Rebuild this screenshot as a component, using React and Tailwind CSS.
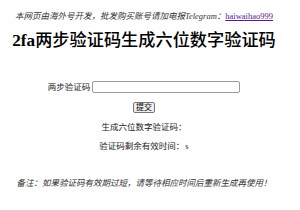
import React from 'react';

const cjk = "font-['Liberation_Serif','Noto_Sans_CJK_SC',serif]";

const App = () => {
  return (
    <div className={`w-[288px] bg-white text-center text-black ${cjk}`}>
      {/* notice line */}
      <p className="pt-[10px] text-[8.5px] leading-[12px] italic text-[#333]">
        本网页由海外号开发，批发购买账号请加电报Telegram：
        <a href="#" className="not-italic text-[#551a8b] underline">haiwaihao999</a>
      </p>

      <h1 className="mt-[9px] text-[17.2px] font-bold leading-[20px]">
        2fa<span className="font-medium">两步验证码生成六位数字验证码</span>
      </h1>

      {/* form */}
      <div className="mt-[30px] flex items-center justify-center gap-[2px] text-[8.5px] leading-[12px] text-[#222]">
        <label htmlFor="code">两步验证码</label>
        <input
          id="code"
          type="text"
          className="h-[12px] w-[148px] rounded-[2px] border border-[#9a9a9a] bg-white"
        />
      </div>
      <div className="mt-[9px] flex justify-center">
        <button className="flex h-[11px] items-center rounded-[2px] border border-[#767676] bg-[#efefef] px-[2px] text-[8px] leading-none">
          提交
        </button>
      </div>

      <p className="mt-[8px] text-[8.5px] leading-[12px] text-[#222]">生成六位数字验证码：</p>
      <p className="mt-[7px] text-[8.5px] leading-[12px] text-[#222]">
        验证码剩余有效时间：<span className="ml-[1px]">s</span>
      </p>

      <p className="mt-[25px] text-[8.5px] leading-[12px] italic text-[#333]">
        备注：如果验证码有效期过短，请等待相应时间后重新生成再使用！
      </p>
      <div className="h-[22px]" />
    </div>
  );
};

export default App;
